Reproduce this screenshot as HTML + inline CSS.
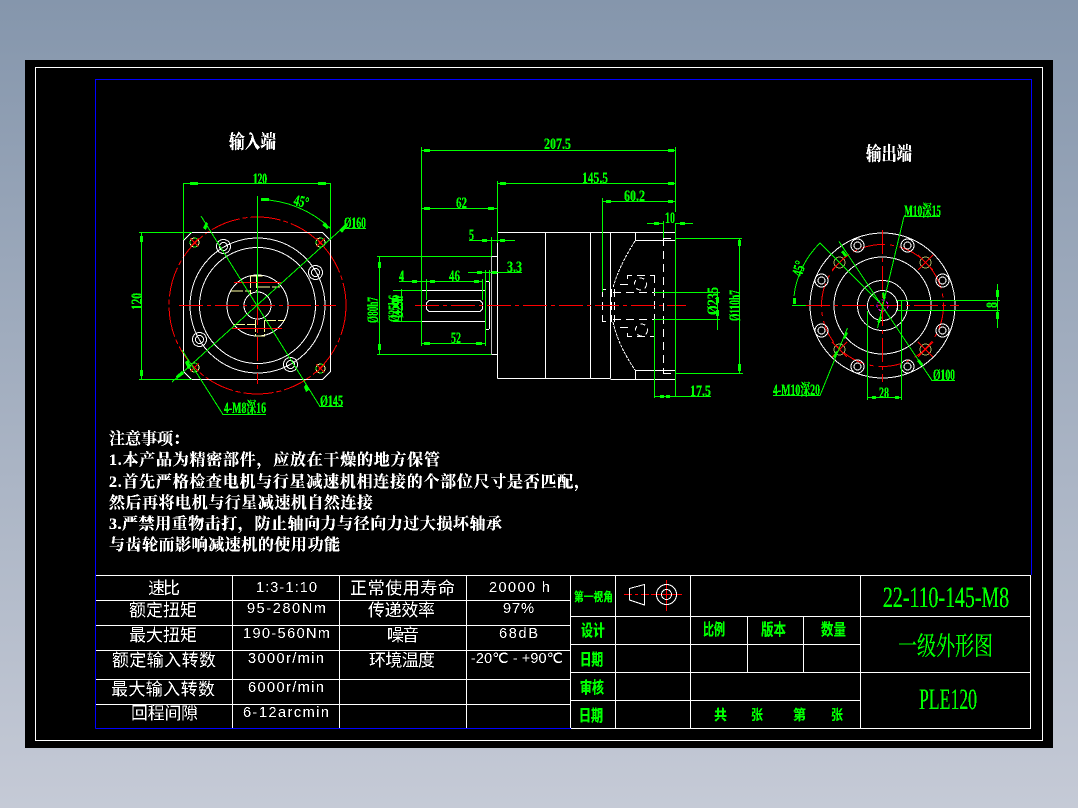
<!DOCTYPE html>
<html><head><meta charset="utf-8"><title>PLE120</title>
<style>
html,body{margin:0;padding:0;width:1078px;height:808px;overflow:hidden;background:linear-gradient(#8596ac,#c5cad6)}
svg{position:absolute;left:0;top:0;display:block}
.w,.g,.r,.y,.b,.w path,.g path{fill:none}
.w{stroke:#fff}.g{stroke:#0f0}.r{stroke:#f00}.y{stroke:#ffffa0}.b{stroke:#00f}
.ax{stroke-dasharray:24 4 4 4}
.da{stroke-dasharray:8 5}
text{font-family:"Liberation Serif","Noto Serif CJK SC",serif;fill:#0f0;stroke:none}
.n{font-weight:700;font-size:16px}
.s{font-family:"Liberation Sans",sans-serif;fill:#fff;font-size:14.5px}
.c{font-family:"Liberation Sans","Noto Sans CJK SC",sans-serif;fill:#fff;font-size:17px}
.h{font-family:"Liberation Sans","Noto Sans CJK SC",sans-serif;font-weight:700;font-size:16px}
.t{fill:#fff;font-weight:700;font-size:16px;font-family:"Liberation Serif","Noto Serif CJK SC",serif}
</style></head><body>
<svg width="1078" height="808" viewBox="0 0 1078 808" xmlns="http://www.w3.org/2000/svg">
<defs>
<filter id="f" filterUnits="userSpaceOnUse" x="0" y="0" width="1078" height="808" color-interpolation-filters="sRGB"><feComponentTransfer><feFuncA type="discrete" tableValues="0 1 1 1"/></feComponentTransfer></filter>
<filter id="f2" filterUnits="userSpaceOnUse" x="0" y="0" width="1078" height="808" color-interpolation-filters="sRGB"><feComponentTransfer><feFuncA type="discrete" tableValues="0 0 1 1"/></feComponentTransfer></filter>
</defs>
<rect x="25" y="60" width="1028" height="688" fill="#000"/>
<g shape-rendering="crispEdges" stroke-width="1">
<rect class="w" x="35.5" y="67.5" width="1007" height="673"/>
<path class="b" d="M95.5 728.5V79.5H1031.5V575M95.5 728.5H571"/>

<!-- Left view -->
<circle class="r" cx="257.5" cy="305.5" r="88.5" stroke-dasharray="30 3 5 3"/>
<path class="w" d="M191.5 232.5H322.5L330.5 240.5V371.5L322.5 379.5H191.5L183.5 371.5V240.5Z"/>
<circle class="w" cx="257.5" cy="305.5" r="67.5"/><circle class="w" cx="257.5" cy="305.5" r="58"/>
<circle class="w" cx="257.5" cy="305.5" r="30.5"/><circle class="w" cx="257.5" cy="305.5" r="13.5"/>
<g class="w"><circle cx="223.5" cy="246.5" r="7"/><circle cx="223.5" cy="246.5" r="4"/><circle cx="315.5" cy="272.5" r="7"/><circle cx="315.5" cy="272.5" r="4"/><circle cx="199.5" cy="339.5" r="7"/><circle cx="199.5" cy="339.5" r="4"/><circle cx="290.5" cy="364.5" r="7"/><circle cx="290.5" cy="364.5" r="4"/></g>
<g class="g"><circle cx="194.5" cy="242.5" r="4.5"/><circle cx="320.5" cy="242.5" r="4.5"/><circle cx="194.5" cy="367.5" r="4.5"/><circle cx="320.5" cy="368.5" r="4.5"/></g>
<g class="y" stroke-dasharray="5 3"><circle cx="194.5" cy="242.5" r="4.5"/><circle cx="320.5" cy="242.5" r="4.5"/><circle cx="194.5" cy="367.5" r="4.5"/><circle cx="320.5" cy="368.5" r="4.5"/></g>
<path class="r" d="M190.5 238.5l8 8M198.5 238.5l-8 8M316.5 238.5l8 8M324.5 238.5l-8 8M190.5 363.5l8 8M198.5 363.5l-8 8M316.5 364.5l8 8M324.5 364.5l-8 8"/>
<path class="y" d="M250.5 276V296M256.5 276V291M250.5 276H264M258 287H280M231 291H250M233 324.5H255M264 320.5H285M255.5 320V336M264.5 320V335M255 336H265" stroke-dasharray="12 2"/>
<path class="r" d="M234 282.5H281M232 328.5H282"/>
<path class="r ax" d="M179 305.5H336"/><path class="r ax" d="M257.5 265V384"/>
<path class="g" d="M183.5 183V240M330.5 183V240M183.5 183.5H330.5M139 232.5H192M139 379.5H192M141.5 232V380M257.5 196V305M172 382L342 228.5H366M201 216L320 406.5H343M182 350L223 414.5H266M261 199.5A106 106 0 0 1 330 228"/>
<path fill="#0f0" stroke="none" d="M190 182h8v3h-8zM318 182h8v3h-8zM140 236h3v6h-3zM140 370h3v6h-3zM261 198h8v3h-8zM325 222l4 5-2 2-5-4zM339 230l7-7 2 2-6 8zM176 376l6-5 2 3-7 5zM206 222l-3 6 3 2 2-6zM306 384l3 6-3 2-2-5zM188 360l3 7-3 2-3-7z"/>

<!-- Side view -->
<path class="w" d="M497.5 232.5V378.5M497.5 232.5H675.5V379.5M497.5 378.5H610.5M610.5 379.5H675.5M545.5 232.5V378.5M590.5 232.5V378.5M610.5 232.5V378.5M635.5 232.5V240.5H675.5M635.5 379V370.5H675.5"/>
<path class="w" d="M635 241Q618 268 613 288M613 322Q618 345 635 370" stroke-dasharray="3 1"/>
<path class="w" d="M491.5 256.5H497M491.5 354.5H497M489.5 282V329M485.5 281V330M485.5 281.5H489M485.5 329.5H489M422 290.5H485M422 321.5H485M429 300.5H480L482.5 303V309L480 311.5H429L426.5 309V303Z"/>
<path stroke="#bbb" fill="none" d="M491.5 256V355M421.5 290V322"/>
<path class="w da" d="M663.5 238V373M663 238.5H675M663 373.5H675M613 292.5H654M613 319.5H654M654.5 275V337M620 284.5H627.5V275.5H654M620 327.5H627.5V336.5H654M602.5 289V322M602 289.5H606M602 321.5H606M611.5 289V322M614.5 289V322"/>
<circle class="w" cx="640.5" cy="284" r="6" stroke-dasharray="5 4"/><circle class="w" cx="641.5" cy="330" r="6" stroke-dasharray="5 4"/>
<path class="r ax" d="M415 305.5H686"/>
<path class="g" d="M421.5 147V346M421 150.5H675M497.5 181V243M497 183.5H675M421 208.5H497M469 240.5H515M491.5 237V256M468 272.5H522M485.5 270V346M489.5 270V282M377 256.5H491M377 354.5H491M379.5 256V355M393 290.5H422M393 321.5H422M401.5 289V322M399 281.5H482M426.5 279V300M482.5 279V300M421 343.5H485M602.5 198V292M602 201.5H675M647 223.5H663M675 223.5H693M663.5 221V238M675.5 147V212M675.5 224V397M675 238.5H742M675 373.5H743M739.5 238V374M654 292.5H720M654 319.5H720M717.5 292V330M654.5 319V398M654 396.5H711"/>
<path fill="#0f0" stroke="none" d="M424 149h6v3h-6zM668 149h6v3h-6zM500 182h6v3h-6zM668 182h6v3h-6zM424 207h6v3h-6zM488 207h6v3h-6zM482 239h5v3h-5zM500 239h5v3h-5zM477 271h5v3h-5zM492 271h5v3h-5zM378 262h3v6h-3zM378 344h3v6h-3zM412 280h5v3h-5zM430 280h5v3h-5zM474 280h5v3h-5zM424 342h6v3h-6zM476 342h6v3h-6zM606 200h5v3h-5zM668 200h5v3h-5zM654 222h5v3h-5zM680 222h5v3h-5zM738 240h3v6h-3zM738 364h3v7h-3zM716 297h3v6h-3zM716 310h3v6h-3zM660 395h4v3h-4zM666 395h4v3h-4z"/>

<!-- Right view -->
<circle class="w" cx="882.5" cy="305.5" r="72.5"/><circle class="w" cx="882.5" cy="305.5" r="48.5"/><circle class="w" cx="882.5" cy="305.5" r="25"/><circle class="w" cx="882.5" cy="305.5" r="15"/>
<circle class="r" cx="882.5" cy="305.5" r="61" stroke-dasharray="24 5 4 5"/>
<g class="w"><circle cx="857.5" cy="245.5" r="6.5"/><circle cx="857.5" cy="245.5" r="3.5"/><circle cx="907.5" cy="245.5" r="6.5"/><circle cx="907.5" cy="245.5" r="3.5"/><circle cx="942.5" cy="280.5" r="6.5"/><circle cx="942.5" cy="280.5" r="3.5"/><circle cx="942.5" cy="330.5" r="6.5"/><circle cx="942.5" cy="330.5" r="3.5"/><circle cx="907.5" cy="366.5" r="6.5"/><circle cx="907.5" cy="366.5" r="3.5"/><circle cx="857.5" cy="366.5" r="6.5"/><circle cx="857.5" cy="366.5" r="3.5"/><circle cx="821.5" cy="330.5" r="6.5"/><circle cx="821.5" cy="330.5" r="3.5"/><circle cx="821.5" cy="280.5" r="6.5"/><circle cx="821.5" cy="280.5" r="3.5"/></g>
<g stroke="#a8b060" fill="none"><circle cx="839.5" cy="262.5" r="5.5"/><circle cx="925.5" cy="262.5" r="5.5"/><circle cx="839.5" cy="349.5" r="5.5"/><circle cx="925.5" cy="349.5" r="5.5"/></g>
<path class="r" d="M832 255l15 15M847 255l-15 15M918 255l15 15M933 255l-15 15M832 342l15 15M847 342l-15 15M918 342l15 15M933 342l-15 15"/>
<path class="r ax" d="M806 305.5H959"/><path class="r ax" d="M882.5 230V382"/>
<circle cx="882.5" cy="305.5" r="5.5" fill="none" stroke="#f0f" stroke-dasharray="3 2"/>
<path class="w" d="M897.5 300V311"/>
<path class="g" d="M897 300.5H1000M897 310.5H1000M997.5 284V328M867.5 311V400M901.5 300V400M867 397.5H902M904 216.5H940M904 216.5L877.5 328M820 243L882 305M792 305.5H806M794 296A88 88 0 0 1 820 243M839 241.5L932 380.5H955M773 395.5H820L847.5 328"/>
<path fill="#0f0" stroke="none" d="M793 298h3v6h-3zM996 290h3v7h-3zM996 312h3v7h-3zM872 396h4v3h-4zM895 396h4v3h-4zM884 292l2 6-3 1-1-6zM877 322l3-6 2 1-2 6zM843 250l4 5-2 2-4-5zM919 359l4 5-2 2-4-5zM843 338l3-6 2 1-3 6zM833 357l3-6 2 1-3 6z"/>

<!-- Tables -->
<path class="w" d="M96 575.5H1030.5V728.5H571M96 600.5H570M96 625.5H570M96 650.5H570M96 679.5H570M96 704.5H570M232.5 575V728M339.5 575V728M466.5 575V728M570.5 575V728M615.5 575V728M690.5 575V728M860.5 575V728M1030.5 575V729M570 616.5H1030M570 644.5H860M570 672.5H1030M570 700.5H860M747.5 616V672M803.5 616V672"/>
<path class="r" stroke-dasharray="8 3 3 3" d="M624 594.5H649"/><path class="r" d="M651 594.5H682M666.5 580V611"/>
<path class="w" d="M629.5 588.5L644.5 584.5V605L629.5 600Z"/>
<circle class="w" cx="666.5" cy="594.5" r="10"/><circle class="w" cx="666.5" cy="594.5" r="5"/>
</g>

<g filter="url(#f)">
<text class="n" x="544" y="149" textLength="27" lengthAdjust="spacingAndGlyphs">207.5</text>
<text class="n" x="582" y="183" textLength="26" lengthAdjust="spacingAndGlyphs">145.5</text>
<text class="n" x="624" y="201" textLength="21" lengthAdjust="spacingAndGlyphs">60.2</text>
<text class="n" x="665" y="223" textLength="10" lengthAdjust="spacingAndGlyphs">10</text>
<text class="n" x="690" y="396" textLength="21" lengthAdjust="spacingAndGlyphs">17.5</text>
<text class="n" x="456" y="208" textLength="11" lengthAdjust="spacingAndGlyphs">62</text>
<text class="n" x="469" y="240" textLength="5" lengthAdjust="spacingAndGlyphs">5</text>
<text class="n" x="507" y="272" textLength="15" lengthAdjust="spacingAndGlyphs">3.3</text>
<text class="n" x="399" y="281" textLength="5" lengthAdjust="spacingAndGlyphs">4</text>
<text class="n" x="449" y="281" textLength="11" lengthAdjust="spacingAndGlyphs">46</text>
<text class="n" x="451" y="343" textLength="10" lengthAdjust="spacingAndGlyphs">52</text>
<text class="n" x="253" y="184" textLength="14" lengthAdjust="spacingAndGlyphs">120</text>
<text class="n" x="344" y="228" textLength="22" lengthAdjust="spacingAndGlyphs">Ø160</text>
<text class="n" x="320" y="406" textLength="23" lengthAdjust="spacingAndGlyphs">Ø145</text>
<text class="n" x="224" y="413" textLength="42" lengthAdjust="spacingAndGlyphs">4-M8深16</text>
<text class="n" x="904" y="216" textLength="37" lengthAdjust="spacingAndGlyphs">M10深15</text>
<text class="n" x="773" y="395" textLength="47" lengthAdjust="spacingAndGlyphs">4-M10深20</text>
<text class="n" x="933" y="380" textLength="22" lengthAdjust="spacingAndGlyphs">Ø100</text>
<text class="n" x="879" y="398" textLength="10" lengthAdjust="spacingAndGlyphs">28</text>
<text class="n" transform="translate(293 205) rotate(12)" textLength="15" lengthAdjust="spacingAndGlyphs">45°</text>
<text class="n" transform="translate(802 277) rotate(-75)" textLength="15" lengthAdjust="spacingAndGlyphs">45°</text>
<text class="n" transform="translate(142 310) rotate(-90)" textLength="17" lengthAdjust="spacingAndGlyphs">120</text>
<text class="n" transform="translate(378 323) rotate(-90)" textLength="26" lengthAdjust="spacingAndGlyphs">Ø80h7</text>
<text class="n" transform="translate(399 322) rotate(-90)" textLength="27" lengthAdjust="spacingAndGlyphs">Ø25h6</text>
<text class="n" transform="translate(403 318) rotate(-90)" textLength="22" lengthAdjust="spacingAndGlyphs">Ø25h</text>
<text class="n" transform="translate(718 315) rotate(-90)" textLength="28" lengthAdjust="spacingAndGlyphs">Ø235</text>
<text class="n" transform="translate(740 321) rotate(-90)" textLength="31" lengthAdjust="spacingAndGlyphs">Ø110h7</text>
<text class="n" transform="translate(997 308) rotate(-90)" textLength="6" lengthAdjust="spacingAndGlyphs">8</text>

<text class="t" x="229" y="148" textLength="47" lengthAdjust="spacingAndGlyphs" style="font-size:19px">输入端</text>
<text class="t" x="866" y="160" textLength="46" lengthAdjust="spacingAndGlyphs" style="font-size:19px">输出端</text>

<text class="t" x="109" y="444" textLength="80">注意事项：</text>
<text class="t" x="109" y="465" textLength="331">1.本产品为精密部件，应放在干燥的地方保管</text>
<text class="t" x="109" y="487" textLength="481">2.首先严格检查电机与行星减速机相连接的个部位尺寸是否匹配，</text>
<text class="t" x="109" y="508" textLength="264">然后再将电机与行星减速机自然连接</text>
<text class="t" x="109" y="529" textLength="393">3.严禁用重物击打，防止轴向力与径向力过大损坏轴承</text>
<text class="t" x="109" y="550" textLength="231">与齿轮而影响减速机的使用功能</text>

<text class="h" x="574" y="601" textLength="39" lengthAdjust="spacingAndGlyphs" style="font-size:12px">第一视角</text>
<text class="h" x="581" y="636" textLength="24" lengthAdjust="spacingAndGlyphs">设计</text>
<text class="h" x="580" y="665" textLength="23" lengthAdjust="spacingAndGlyphs">日期</text>
<text class="h" x="580" y="693" textLength="24" lengthAdjust="spacingAndGlyphs">审核</text>
<text class="h" x="579" y="721" textLength="24" lengthAdjust="spacingAndGlyphs">日期</text>
<text class="h" x="703" y="635" textLength="22" lengthAdjust="spacingAndGlyphs">比例</text>
<text class="h" x="761" y="635" textLength="25" lengthAdjust="spacingAndGlyphs">版本</text>
<text class="h" x="821" y="635" textLength="25" lengthAdjust="spacingAndGlyphs">数量</text>
<text class="h" x="714" y="720" textLength="13" lengthAdjust="spacingAndGlyphs" style="font-size:14px">共</text>
<text class="h" x="751" y="720" textLength="12" lengthAdjust="spacingAndGlyphs" style="font-size:14px">张</text>
<text class="h" x="793" y="720" textLength="13" lengthAdjust="spacingAndGlyphs" style="font-size:14px">第</text>
<text class="h" x="831" y="720" textLength="12" lengthAdjust="spacingAndGlyphs" style="font-size:14px">张</text>
<text x="883" y="607" textLength="126" lengthAdjust="spacingAndGlyphs" style="font-size:30px">22-110-145-M8</text>
<text x="898" y="655" textLength="95" lengthAdjust="spacingAndGlyphs" style="font-size:26px">一级外形图</text>
<text x="919" y="709" textLength="58" lengthAdjust="spacingAndGlyphs" style="font-size:30px">PLE120</text>
</g>

<g filter="url(#f2)">
<text class="c" x="148" y="594" textLength="32">速比</text>
<text class="c" x="129" y="616" textLength="68">额定扭矩</text>
<text class="c" x="129" y="641" textLength="68">最大扭矩</text>
<text class="c" x="112" y="666" textLength="104">额定输入转数</text>
<text class="c" x="111" y="695" textLength="104">最大输入转数</text>
<text class="c" x="131" y="719" textLength="67">回程间隙</text>
<text class="c" x="350" y="594" textLength="105">正常使用寿命</text>
<text class="c" x="368" y="616" textLength="67">传递效率</text>
<text class="c" x="387" y="641" textLength="32">噪音</text>
<text class="c" x="369" y="666" textLength="66">环境温度</text>

<text class="s" x="256" y="592" textLength="61">1:3-1:10</text>
<text class="s" x="489" y="592" textLength="61">20000 h</text>
<text class="s" x="247" y="613" textLength="79">95-280Nm</text>
<text class="s" x="503" y="613" textLength="31">97%</text>
<text class="s" x="243" y="638" textLength="87">190-560Nm</text>
<text class="s" x="499" y="638" textLength="39">68dB</text>
<text class="s" x="248" y="663" textLength="76">3000r/min</text>
<text class="s" x="471" y="663" textLength="92">-20℃ - +90℃</text>
<text class="s" x="248" y="692" textLength="76">6000r/min</text>
<text class="s" x="243" y="717" textLength="86">6-12arcmin</text>
</g>
</svg>
</body></html>
